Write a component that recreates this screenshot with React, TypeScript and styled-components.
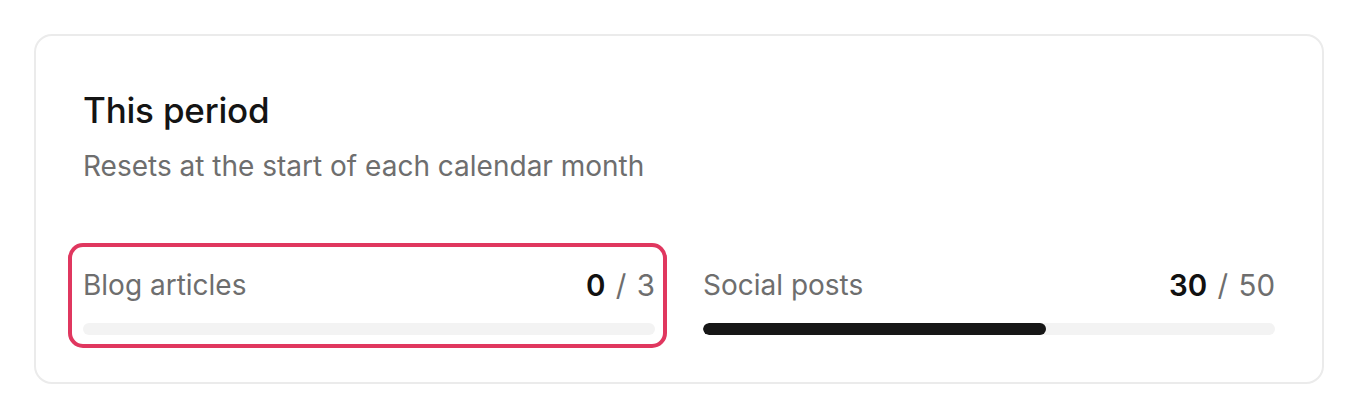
import React from "react";
import styled, { createGlobalStyle } from "styled-components";

const GlobalStyle = createGlobalStyle`
    html, body {
        margin: 0;
        padding: 0;
        background: #fff;
    }
    body {
        font-family: Inter, "Noto Sans", "Liberation Sans", sans-serif;
        -webkit-font-smoothing: antialiased;
    }
`;

const usage = [
    { label: "Blog articles", used: 0, limit: 3, highlighted: true },
    { label: "Social posts", used: 30, limit: 50, highlighted: false },
];

export default function App() {
    return (
        <>
            <GlobalStyle />
            <Page>
                <Card>
                    <Title>This period</Title>
                    <Subtitle>Resets at the start of each calendar month</Subtitle>
                    <UsageGrid>
                        {usage.map((item) => (
                            <UsageItem key={item.label} $highlighted={item.highlighted}>
                                <UsageHeader>
                                    <UsageLabel>{item.label}</UsageLabel>
                                    <UsageCount>
                                        <strong>{item.used}</strong>
                                        <Sep> / </Sep>
                                        {item.limit}
                                    </UsageCount>
                                </UsageHeader>
                                <Track>
                                    <Fill style={{ width: `${(item.used / item.limit) * 100}%` }} />
                                </Track>
                            </UsageItem>
                        ))}
                    </UsageGrid>
                </Card>
            </Page>
        </>
    );
}

const Page = styled.div`
    padding: 34px 32px 30px 34px;
`;

const Card = styled.section`
    border: 2px solid #ebebeb;
    border-radius: 18px;
    padding: 52px 47px 47px;
    background: #fff;
`;

const Title = styled.h2`
    margin: 0;
    font-size: 35px;
    line-height: 44px;
    font-weight: 500;
    color: #141414;
    letter-spacing: -0.2px;
`;

const Subtitle = styled.p`
    margin: 16px 0 0;
    font-size: 28px;
    line-height: 36px;
    color: #6e6e6e;
`;

const UsageGrid = styled.div`
    display: grid;
    grid-template-columns: 1fr 1fr;
    gap: 48px;
    margin-top: 81px;
`;

const UsageItem = styled.div<{ $highlighted?: boolean }>`
    position: relative;

    ${({ $highlighted }) =>
        $highlighted &&
        `
        &::after {
            content: "";
            position: absolute;
            top: -22px;
            bottom: -13px;
            left: -15px;
            right: -12px;
            border: 4px solid #e0375f;
            border-radius: 15px;
            pointer-events: none;
        }
    `}
`;

const UsageHeader = styled.div`
    display: flex;
    justify-content: space-between;
    align-items: center;
    line-height: 40px;
`;

const UsageLabel = styled.span`
    font-size: 28px;
    color: #6e6e6e;
`;

const UsageCount = styled.span`
    font-size: 29.5px;
    color: #6e6e6e;
    white-space: pre;

    strong {
        font-weight: 600;
        color: #111;
    }
`;

const Sep = styled.span`
    margin: 0 2px;
`;

const Track = styled.div`
    margin-top: 18px;
    height: 12px;
    border-radius: 999px;
    background: #f3f3f3;
    overflow: hidden;
`;

const Fill = styled.div`
    height: 100%;
    border-radius: 999px;
    background: #161616;
`;
